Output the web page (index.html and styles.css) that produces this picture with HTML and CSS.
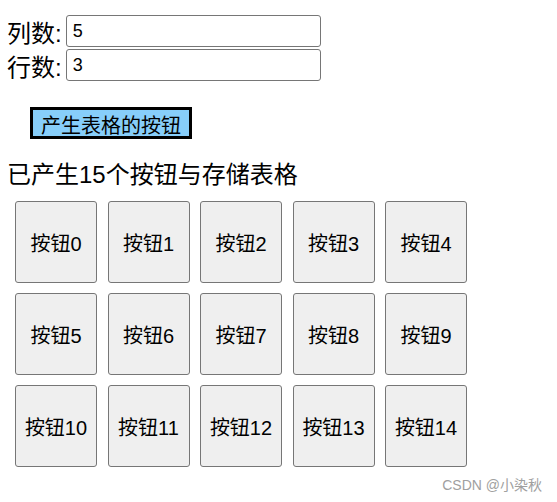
FILE: index.html
```html
<!DOCTYPE html>
<html lang="zh">
<head>
    <meta charset="UTF-8">
    <title>产生表格</title>
    <link rel="stylesheet" href="styles.css">
</head>
<body>
    <div class="form">
        <div class="row"><label>列数:</label><input type="text" value="5"></div>
        <div class="row"><label>行数:</label><input type="text" value="3"></div>
    </div>
    <button class="make-btn">产生表格的按钮</button>
    <h3 class="status">已产生15个按钮与存储表格</h3>
    <div class="grid">
        <button class="cell">按钮0</button>
        <button class="cell">按钮1</button>
        <button class="cell">按钮2</button>
        <button class="cell">按钮3</button>
        <button class="cell">按钮4</button>
        <button class="cell">按钮5</button>
        <button class="cell">按钮6</button>
        <button class="cell">按钮7</button>
        <button class="cell">按钮8</button>
        <button class="cell">按钮9</button>
        <button class="cell">按钮10</button>
        <button class="cell">按钮11</button>
        <button class="cell">按钮12</button>
        <button class="cell">按钮13</button>
        <button class="cell">按钮14</button>
    </div>
    <div class="mark">CSDN @小染秋</div>
</body>
</html>
```

FILE: styles.css
```css
body {
    font-family: "Liberation Sans", "Noto Sans CJK SC", sans-serif;
    margin: 0;
    padding: 15px 7px 0 7px;
    color: #000000;
    background-color: #ffffff;
    width: 557px;
    height: 502px;
    position: relative;
    box-sizing: border-box;
}
.form {
    display: flex;
    flex-direction: column;
    gap: 2px;
}
.row {
    display: flex;
    align-items: center;
    font-size: 24px;
    height: 32px;
}
.row label {
    margin-right: 4px;
}
.row input {
    width: 255px;
    height: 32px;
    box-sizing: border-box;
    border: 1px solid #767676;
    border-radius: 3px;
    font-family: inherit;
    font-size: 18px;
    padding: 0 6px;
}
.make-btn {
    display: block;
    margin: 26px 0 0 23px;
    width: 162px;
    height: 32px;
    box-sizing: border-box;
    background-color: #87cefa;
    border: 3px solid #000000;
    border-radius: 0;
    font-family: inherit;
    font-size: 20px;
    padding: 0;
}
.status {
    font-size: 24px;
    font-weight: normal;
    margin: 21px 0 0 0;
    line-height: 30px;
}
.grid {
    display: grid;
    grid-template-columns: repeat(5, 82px);
    gap: 10px 10.5px;
    margin: 11px 0 0 8px;
}
.cell {
    width: 82px;
    height: 82px;
    background-color: #efefef;
    border: 1px solid #767676;
    border-radius: 3px;
    font-family: inherit;
    font-size: 20px;
    padding: 0;
}
.mark {
    position: absolute;
    right: 15px;
    bottom: 8px;
    font-size: 14px;
    color: #a0a0a0;
}
```
